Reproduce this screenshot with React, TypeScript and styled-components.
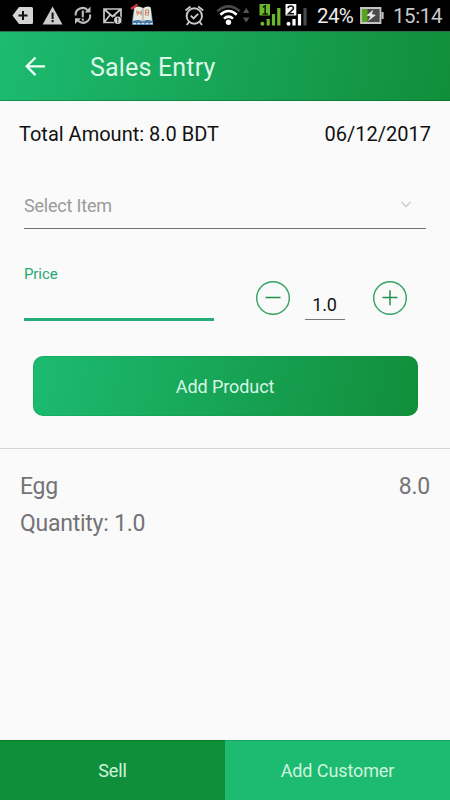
import React from "react";
import styled, { createGlobalStyle } from "styled-components";

const GlobalStyle = createGlobalStyle`
  * { box-sizing: border-box; }
  body { margin: 0; background: #fafafa; }
  button, input { font-family: inherit; }
`;

const Screen = styled.div`
  display: flex;
  flex-direction: column;
  width: 450px;
  height: 800px;
  overflow: hidden;
  background: #fafafa;
  font-family: Roboto, "Noto Sans", sans-serif;
  color: #111;
`;

const StatusBar = styled.div`
  display: flex;
  align-items: center;
  height: 31px;
  flex: none;
  background: #000;
`;

const StatusIcon = styled.svg<{ $gap: number }>`
  display: block;
  flex: none;
  height: 31px;
  margin-left: ${(p) => p.$gap}px;
`;

const StatusText = styled.span<{ $gap: number; $width: number; $spacing: number; $tone: string }>`
  flex: none;
  width: ${(p) => p.$width}px;
  margin-left: ${(p) => p.$gap}px;
  padding-top: 1px;
  font-size: 20.5px;
  line-height: 31px;
  letter-spacing: ${(p) => p.$spacing}px;
  white-space: nowrap;
  color: ${(p) => p.$tone};
`;

const Header = styled.header`
  display: flex;
  align-items: center;
  height: 70px;
  flex: none;
  padding: 3px 0 0 23px;
  background: linear-gradient(100deg, #1cbb70 0%, #17a456 50%, #118e3a 100%);
  box-shadow: inset 0 1px 0 #28704c, inset 0 -1px 0 rgba(0, 70, 20, 0.35);
`;

const BackButton = styled.button`
  display: flex;
  width: 24px;
  height: 24px;
  margin-top: -2px;
  padding: 0;
  border: 0;
  background: none;
  color: #f2fff8;
`;

const Title = styled.h1`
  margin: 1px 0 0 43px;
  font-size: 25px;
  font-weight: 400;
  line-height: 30px;
  letter-spacing: 0.18px;
  color: #dcf8e8;
`;

const Summary = styled.div`
  display: flex;
  justify-content: space-between;
  height: 66px;
  padding: 0 19px;
  font-size: 20px;
  line-height: 67px;
`;

const Form = styled.section`
  height: 282px;
  padding: 13px 24px 0;
  border-bottom: 1px solid #d6d6d6;
`;

const SelectField = styled.div`
  display: flex;
  justify-content: space-between;
  align-items: center;
  height: 49px;
  padding: 2px 14px 0 0;
  border-bottom: 1px solid #757575;
  font-size: 18px;
  letter-spacing: -0.2px;
  color: #9b9b9b;
`;

const EntryRow = styled.div`
  display: flex;
  align-items: flex-start;
  height: 126px;
`;

const PriceField = styled.label`
  display: block;
  width: 190px;
  height: 92px;
  padding-top: 36px;
  border-bottom: 3px solid #26ac76;
  font-size: 15px;
  line-height: 18px;
  letter-spacing: -0.1px;
  color: #25a872;
`;

const StepButton = styled.button<{ $gap: number }>`
  display: flex;
  width: 36px;
  height: 36px;
  margin: 51px 0 0 ${(p) => p.$gap}px;
  padding: 0;
  border: 0;
  background: none;
`;

const Amount = styled.div`
  width: 40px;
  height: 29px;
  margin: 62px 0 0 14px;
  border-bottom: 1px solid #777;
  font-size: 18px;
  line-height: 28px;
  letter-spacing: -0.2px;
  text-align: center;
`;

const AddProduct = styled.button`
  display: block;
  width: 385px;
  height: 60px;
  margin: 1px 0 0 8.5px;
  padding: 0;
  border: 0;
  border-radius: 10px;
  background: linear-gradient(100deg, #1cbb70 0%, #17a456 50%, #118e3a 100%);
  box-shadow: inset 0 0 0 1px rgba(17, 142, 58, 0.25);
  font-size: 18px;
  letter-spacing: -0.08px;
  color: #d6f7e3;
`;

const ProductList = styled.section`
  flex: 1;
  padding: 19px 20px;
  font-size: 23px;
  line-height: 37px;
  letter-spacing: -0.25px;
  color: #737377;
`;

const ProductRow = styled.div`
  display: flex;
  justify-content: space-between;
`;

const Footer = styled.footer`
  display: flex;
  height: 60px;
  flex: none;
`;

const FooterButton = styled.button<{ $tone: string; $edge: string }>`
  flex: 1;
  padding: 0;
  border: 0;
  background: ${(p) => p.$tone};
  box-shadow: inset 0 1px 0 ${(p) => p.$edge};
  font-size: 18px;
  letter-spacing: -0.1px;
  color: #d0f3de;
`;

function StatusIcons() {
  return (
    <>
      <StatusIcon $gap={12} width="22" viewBox="12 0 22 31">
        <path d="M19 7H31.5Q33 7 33 8.5V22.5Q33 24 31.5 24H19L12.5 15.5Z" fill="#d4d4d4" />
        <path d="M23 11v9M18.5 15.5h9" stroke="#111" strokeWidth="2" />
      </StatusIcon>
      <StatusIcon $gap={8} width="22" viewBox="42 0 22 31">
        <path d="M52.6 6.5L62.5 24.5H42.6Z" fill="#cbcbcb" />
        <path d="M52.6 12.5v6.5M52.6 20v2.3" stroke="#111" strokeWidth="2" />
      </StatusIcon>
      <StatusIcon $gap={10} width="19" viewBox="74 0 19 31">
        <g fill="none" stroke="#bcbcbc" strokeWidth="2.1">
          <path d="M75.6 15.5A7 7 0 0 1 88 10.6M90 14.5A7 7 0 0 1 78 20.5" />
          <path d="M82.8 10.5v6.8M82.8 18.5v2.3" />
        </g>
        <path d="M90.5 6.5v6h-6zM75 18.3h6l-6 5.7z" fill="#bcbcbc" />
      </StatusIcon>
      <StatusIcon $gap={10} width="20" viewBox="103 0 20 31">
        <path d="M104 9H121V22.5H104ZM104 9L112.5 16.5L121 9M104 22.5L110 15M114 15.2L118 19" fill="none" stroke="#c9c9c9" strokeWidth="1.7" />
        <circle cx="117.8" cy="20.3" r="4.6" fill="#000" />
        <circle cx="117.8" cy="20.3" r="3.7" fill="#d4d4d4" />
        <path d="M117.8 17.7v3M117.8 21.6v1.2" stroke="#111" strokeWidth="1.2" />
      </StatusIcon>
      <StatusIcon $gap={7} width="24" viewBox="130 0 24 31">
        <path d="M132 20L134 8H151L153 22V25H132Z" fill="#477aa5" />
        <path d="M134.5 7Q139.5 5.5 143 8Q147 5.5 150.5 7L152 21Q147 19 143 21.5Q138 19 133 21Z" fill="#e8e8df" />
        <path d="M143 8v13" stroke="#9c9d96" />
        <path d="M136.5 10.5l1 4 1.5-3 2 3 .5-4M145.5 10v5h3v-5h-3m0 2.5h3" stroke="#c98a68" fill="none" strokeWidth="1.1" />
        <path d="M131 9L137.5 4.5" stroke="#cc3037" strokeWidth="2.5" />
        <path d="M133 23.7h20" stroke="#d3e5ef" strokeDasharray="3 1.2" strokeWidth="1.3" />
      </StatusIcon>
      <StatusIcon $gap={30} width="22" viewBox="184 0 22 31">
        <g fill="none" stroke="#c9c9c9" strokeWidth="1.9">
          <circle cx="194.3" cy="16" r="7.7" />
          <path d="M185.5 10.5L190.5 6.5M198.2 6.5L203.2 10.5M189 22L186.7 25M199.7 22L202 25M190.8 15.7l2.8 2.8 4.5-4.7" />
        </g>
      </StatusIcon>
      <StatusIcon $gap={10} width="25" viewBox="216 0 25 31">
        <g fill="none" strokeWidth="2.6">
          <path d="M217.3 11.3Q228.5 1.5 239.7 11.3" stroke="#494949" />
          <path d="M220.4 14.7Q228.5 7.3 236.7 14.7M224 18.6Q228.5 14.6 233 18.6" stroke="#fff" />
        </g>
        <circle cx="228.5" cy="22.3" r="2.7" fill="#fff" />
      </StatusIcon>
      <StatusIcon $gap={1} width="9" viewBox="242 0 9 31">
        <path d="M243 13L246.2 8L249.4 13ZM243 17.5H249.4L246.2 22.5Z" fill="#555" />
      </StatusIcon>
      <StatusIcon $gap={8} width="23" viewBox="259 0 23 31">
        <path d="M259.5 4H270V15.5H259.5Z" fill="#6bb72d" />
        <path d="M262.8 7.2L265.2 5.8V14M262.5 14H267.8" fill="none" stroke="#10200a" strokeWidth="1.6" />
        <circle cx="262.4" cy="23.8" r="2" fill="#6bb72d" />
        <path d="M268.2 19v6.5M273.5 14v11.5M278.8 8v17.5" stroke="#6bb72d" strokeWidth="3.2" />
      </StatusIcon>
      <StatusIcon $gap={3} width="23" viewBox="285 0 23 31">
        <path d="M285.5 4H296.3V15.5H285.5Z" fill="#f6f6f6" />
        <path d="M288 8.2Q288.3 5.8 291 6Q294.4 6.5 293 9.3L288.5 13.8H294" fill="none" stroke="#111" strokeWidth="1.6" />
        <circle cx="288.5" cy="23.8" r="2" fill="#fff" />
        <path d="M294 19v6.5M299.5 14v11.5" stroke="#fff" strokeWidth="3.2" />
        <path d="M305 8v17.5" stroke="#4a4a4a" strokeWidth="3.2" />
      </StatusIcon>
    </>
  );
}

function Stepper({ gap, plus = false }: { gap: number; plus?: boolean }) {
  return (
    <StepButton $gap={gap} aria-label={plus ? "Increase" : "Decrease"}>
      <svg width="36" height="36" viewBox="0 0 36 36" fill="none" stroke="#35a363">
        <circle cx="18" cy="18" r="16.3" strokeWidth="1.4" />
        <path d={plus ? "M10.5 17.5h15M18 10.2v15" : "M10.5 17.5h15"} strokeWidth="1.5" stroke="#209052" />
      </svg>
    </StepButton>
  );
}

export default function App() {
  return (
    <Screen>
      <GlobalStyle />
      <StatusBar>
        <StatusIcons />
        <StatusText $gap={9} $width={37} $spacing={-0.6} $tone="#ececec">24%</StatusText>
        <StatusIcon $gap={6} width="25" viewBox="360 0 25 31">
          <path d="M361 8H380.5V23H361Z" fill="#4a4a4a" />
          <path d="M361 8h6.5v15H361Z" fill="#57a51c" />
          <path d="M361 8H380.5V23H361Z" fill="none" stroke="#c4c4c4" strokeWidth="1.8" />
          <path d="M382.5 12v7" stroke="#c4c4c4" strokeWidth="2.2" />
          <path d="M373.5 9.5L366.5 15.5L370.5 16.5L367.5 21.5L376 15L371.8 14Z" fill="#e5e5e5" />
        </StatusIcon>
        <StatusText $gap={8} $width={50} $spacing={-0.4} $tone="#c8c8c8">15:14</StatusText>
      </StatusBar>
      <Header>
        <BackButton aria-label="Back">
          <svg width="24" height="24" viewBox="0 0 24 24" fill="none" stroke="currentColor" strokeWidth="2.3">
            <path d="M22 11.3H4M12.5 2.5L3.7 11.3L12.5 20.1" />
          </svg>
        </BackButton>
        <Title>Sales Entry</Title>
      </Header>
      <Summary>
        <span>Total Amount: 8.0 BDT</span>
        <span>06/12/2017</span>
      </Summary>
      <Form>
        <SelectField>
          Select Item
          <svg width="12" height="8" viewBox="0 0 12 8" fill="none" stroke="#cfcfcf" strokeWidth="1.7">
            <path d="M1.5 1L6 5.5L10.5 1" />
          </svg>
        </SelectField>
        <EntryRow>
          <PriceField>Price</PriceField>
          <Stepper gap={40.5} />
          <Amount>1.0</Amount>
          <Stepper gap={27.5} plus />
        </EntryRow>
        <AddProduct>Add Product</AddProduct>
      </Form>
      <ProductList>
        <ProductRow>
          <span>Egg</span>
          <span>8.0</span>
        </ProductRow>
        <ProductRow>
          <span>Quantity: 1.0</span>
        </ProductRow>
      </ProductList>
      <Footer>
        <FooterButton $tone="#108f3b" $edge="#087a22">Sell</FooterButton>
        <FooterButton $tone="#1cbb71" $edge="#1ca664">Add Customer</FooterButton>
      </Footer>
    </Screen>
  );
}
